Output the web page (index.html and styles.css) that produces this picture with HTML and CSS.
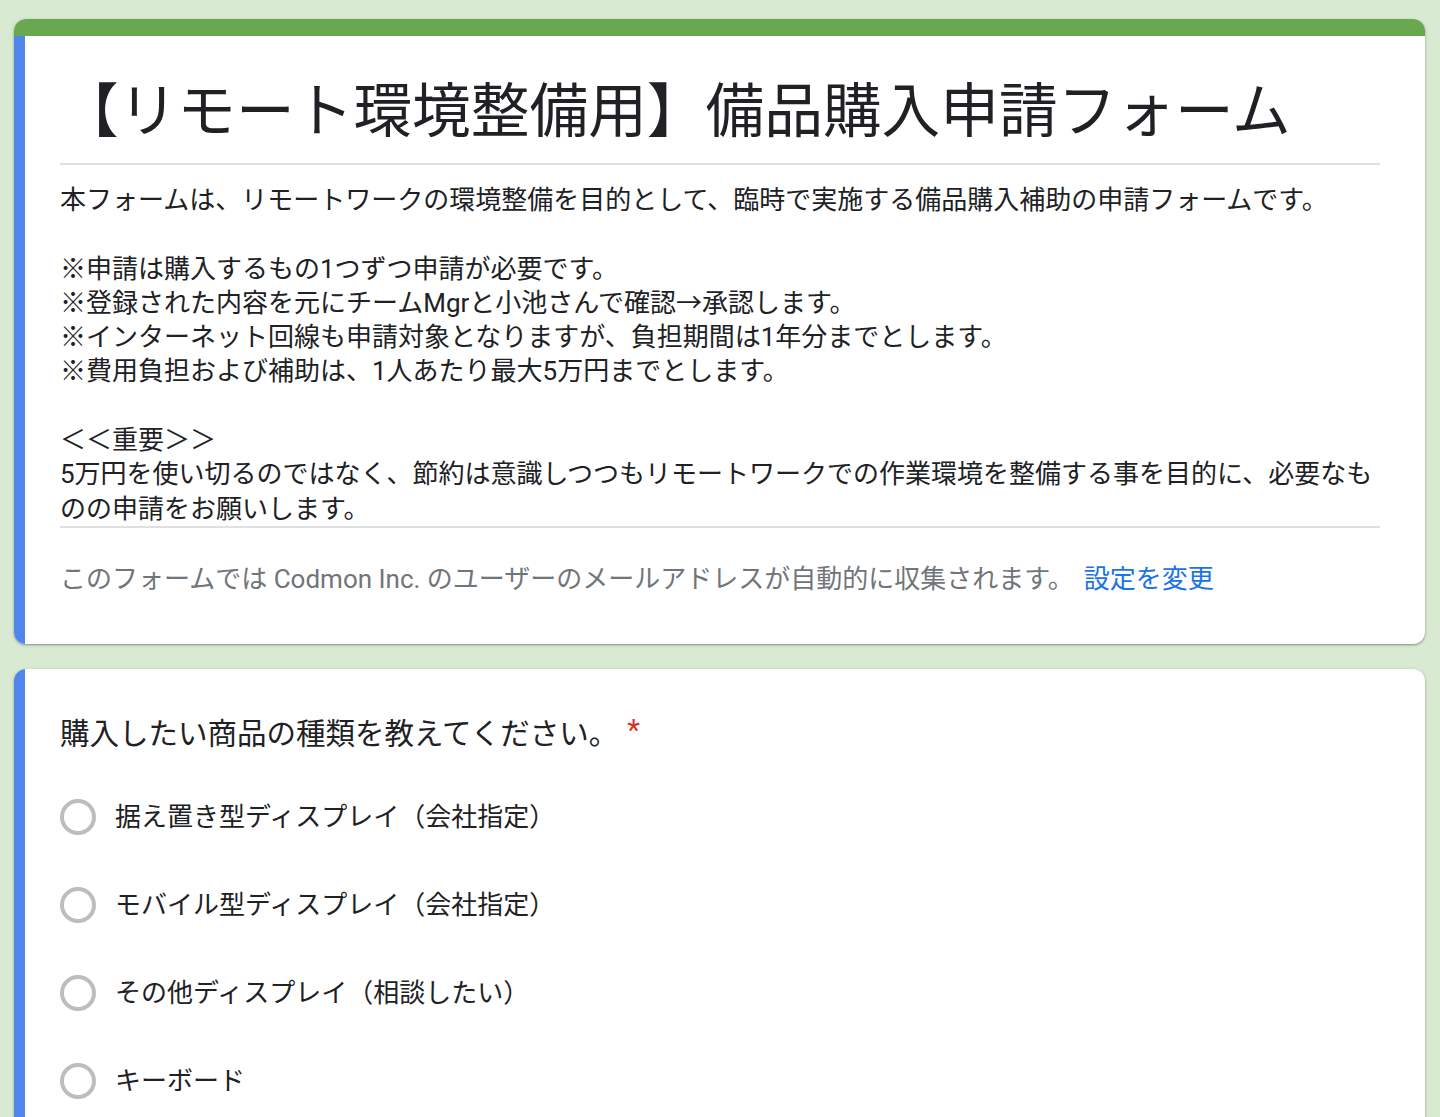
FILE: index.html
```html
<!DOCTYPE html>
<html lang="ja">
<head>
  <meta charset="UTF-8">
  <title>【リモート環境整備用】備品購入申請フォーム</title>
  <link rel="stylesheet" href="styles.css">
</head>
<body>

  <!-- Cabecera del formulario -->
  <div class="card">
    <div class="top-bar"></div>
    <div class="card-body header">
      <h1 class="title">【リモート環境整備用】備品購入申請フォーム</h1>
      <div class="description">本フォームは、リモートワークの環境整備を目的として、臨時で実施する備品購入補助の申請フォームです。<br>
<br>
※申請は購入するもの1つずつ申請が必要です。<br>
※登録された内容を元にチームMgrと小池さんで確認→承認します。<br>
※インターネット回線も申請対象となりますが、負担期間は1年分までとします。<br>
※費用負担および補助は、1人あたり最大5万円までとします。<br>
<br>
＜＜重要＞＞<br>
5万円を使い切るのではなく、節約は意識しつつもリモートワークでの作業環境を整備する事を目的に、必要なものの申請をお願いします。</div>
      <p class="email-note">このフォームでは Codmon Inc. のユーザーのメールアドレスが自動的に収集されます。<a href="#" class="change-link">設定を変更</a></p>
    </div>
  </div>

  <!-- Pregunta -->
  <div class="card">
    <div class="card-body question">
      <div class="question-title">購入したい商品の種類を教えてください。<span class="required">*</span></div>
      <div class="options">
        <label class="option"><span class="radio"></span><span class="option-text">据え置き型ディスプレイ（会社指定）</span></label>
        <label class="option"><span class="radio"></span><span class="option-text">モバイル型ディスプレイ（会社指定）</span></label>
        <label class="option"><span class="radio"></span><span class="option-text">その他ディスプレイ（相談したい）</span></label>
        <label class="option"><span class="radio"></span><span class="option-text">キーボード</span></label>
      </div>
    </div>
  </div>

</body>
</html>
```

FILE: styles.css
```css
body {
  margin: 0;
  padding: 19px 15px 0 14px;
  background: #d9ead3;
  color: #202124;
  font-family: Roboto, "Noto Sans CJK JP", sans-serif;
}

.card {
  background: #fff;
  border-radius: 12px;
  overflow: hidden;
  margin-bottom: 25px;
  box-shadow: 0 1px 2px rgba(0, 0, 0, 0.3), 0 1px 4px rgba(0, 0, 0, 0.12);
}

.top-bar {
  height: 17px;
  background: #6aa84f;
}

.card-body {
  border-left: 11px solid #4f86ec;
  padding: 0 45px 0 35px;
}

.header {
  padding-top: 38px;
  padding-bottom: 48px;
}

.title {
  margin: 0;
  font-size: 58.7px;
  font-weight: 400;
  line-height: 76px;
  padding-bottom: 13px;
  border-bottom: 2px solid #e0e0e0;
}

.description {
  margin-top: 18px;
  font-size: 26px;
  line-height: 34.3px;
  border-bottom: 2px solid #e0e0e0;
}

.email-note {
  margin: 34px 0 0;
  font-size: 26px;
  line-height: 34px;
  color: #70757a;
}

.change-link {
  color: #1a73e8;
  text-decoration: none;
  margin-left: 10px;
}

.question {
  padding-top: 46px;
  padding-bottom: 30px;
}

.question-title {
  font-size: 29.5px;
  line-height: 38px;
  margin-bottom: 20px;
}

.required {
  color: #d93025;
  margin-left: 9px;
  line-height: 0;
  vertical-align: 4px;
}

.option {
  display: flex;
  align-items: center;
  height: 88px;
}

.radio {
  width: 28px;
  height: 28px;
  border: 4px solid #bdbdbd;
  border-radius: 50%;
  flex-shrink: 0;
}

.option-text {
  margin-left: 19px;
  font-size: 26px;
  line-height: 34px;
}
```
